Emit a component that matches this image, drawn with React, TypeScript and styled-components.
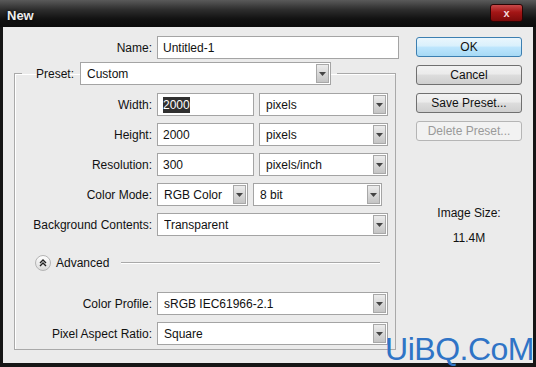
import React from 'react';
import styled, { createGlobalStyle } from 'styled-components';

const GlobalStyle = createGlobalStyle`
  body {
    margin: 0;
    font-family: 'Liberation Sans', Arial, sans-serif;
    font-size: 12px;
    color: #111;
  }
`;

const Window = styled.div`
  position: relative;
  width: 536px;
  height: 367px;
  box-sizing: border-box;
  padding: 0 3px 4px 3px;
  display: flex;
  flex-direction: column;
  background: #161616;
  overflow: hidden;
`;

const TitleBar = styled.div`
  height: 27px;
  flex: none;
  display: flex;
  justify-content: space-between;
  align-items: flex-start;
  margin: 0 -3px;
  padding: 0 13px 0 7px;
  background: linear-gradient(#5a5a5a 0%, #2e2e2e 35%, #121212 70%, #0c0c0c 100%);
`;

const Title = styled.span`
  margin-top: 8px;
  color: #ececec;
  font-weight: bold;
  font-size: 13px;
  text-shadow: 0 0 3px #000;
`;

const CloseButton = styled.div`
  margin-top: 4px;
  width: 33px;
  height: 18px;
  box-sizing: border-box;
  border: 1px solid #2a0505;
  border-radius: 3px;
  background: linear-gradient(#c84a4a 0%, #a41616 45%, #7c0a0a 100%);
  color: #f4dede;
  font-size: 11px;
  font-weight: bold;
  display: flex;
  align-items: center;
  justify-content: center;
`;

const Body = styled.div`
  flex: 1;
  display: flex;
  padding: 9px 0 0 11px;
  background: #ebebeb;
`;

const FormColumn = styled.div`
  width: 385px;
  display: flex;
  flex-direction: column;
`;

const Row = styled.div`
  display: flex;
  align-items: center;
  gap: 5px;
  height: 23px;
`;

const Label = styled.span<{ $w: number }>`
  width: ${(p) => p.$w}px;
  flex: none;
  text-align: right;
  white-space: nowrap;
`;

const TextBox = styled.div<{ $w: number }>`
  width: ${(p) => p.$w}px;
  height: 23px;
  box-sizing: border-box;
  flex: none;
  display: flex;
  align-items: center;
  padding-left: 5px;
  background: #fff;
  border: 1px solid #a4a4a4;
  white-space: nowrap;
`;

const Selected = styled.span`
  background: #303030;
  color: #fff;
  padding: 1px 0;
`;

const DropBox = styled.div<{ $w: number }>`
  width: ${(p) => p.$w}px;
  height: 23px;
  box-sizing: border-box;
  flex: none;
  display: flex;
  align-items: center;
  padding: 0 1px 0 6px;
  background: #fff;
  border: 1px solid #a4a4a4;
  white-space: nowrap;
`;

const DropValue = styled.span`
  flex: 1;
  overflow: hidden;
`;

const Arrow = styled.span`
  width: 13px;
  height: 19px;
  box-sizing: border-box;
  flex: none;
  display: flex;
  align-items: center;
  justify-content: center;
  border: 1px solid #a8a8a8;
  background: linear-gradient(#ececec, #c4c4c4);
`;

const Group = styled.fieldset`
  width: 382px;
  box-sizing: border-box;
  min-width: 0;
  margin: 3px 0 0 0;
  padding: 8px 0 4px 0;
  border: 1px solid #a9a9a9;
  box-shadow: inset 1px 1px 0 #fff;
`;

const Legend = styled.legend`
  margin-left: 7px;
  padding: 0 6px 0 14px;
  display: flex;
  align-items: center;
  gap: 6px;
`;

const Rows = styled.div`
  display: flex;
  flex-direction: column;
  gap: 7px;
`;

const AdvancedRow = styled.div`
  display: flex;
  align-items: center;
  height: 22px;
  margin: 16px 15px 18px 20px;
  gap: 5px;
`;

const ToggleCircle = styled.span`
  width: 16px;
  height: 16px;
  box-sizing: border-box;
  border-radius: 50%;
  border: 1px solid #b4b4b4;
  background: linear-gradient(#fdfdfd, #dcdcdc);
  display: flex;
  align-items: center;
  justify-content: center;
`;

const Rule = styled.span`
  flex: 1;
  margin-left: 7px;
  border-top: 1px solid #a9a9a9;
  border-bottom: 1px solid #fff;
`;

const ButtonColumn = styled.div`
  width: 106px;
  margin-left: 17px;
  padding-top: 1px;
  display: flex;
  flex-direction: column;
  gap: 8px;
`;

const Button = styled.div<{ $kind?: 'default' | 'disabled' }>`
  height: 20px;
  box-sizing: border-box;
  display: flex;
  align-items: center;
  justify-content: center;
  border-radius: 3px;
  border: 1px solid
    ${(p) => (p.$kind === 'default' ? '#3c7fb1' : p.$kind === 'disabled' ? '#b5b5b5' : '#707070')};
  background: ${(p) =>
    p.$kind === 'default'
      ? 'linear-gradient(#eaf6fd 0%, #d9f0fc 45%, #bee6fd 50%, #a7d9f5 100%)'
      : p.$kind === 'disabled'
        ? '#f2f2f2'
        : 'linear-gradient(#f2f2f2 0%, #ebebeb 45%, #dddddd 50%, #cfcfcf 100%)'};
  color: ${(p) => (p.$kind === 'disabled' ? '#9a9a9a' : '#111')};
`;

const SizeInfo = styled.div`
  margin-top: 52px;
  text-align: center;
  line-height: 25px;
`;

const Watermark = styled.div`
  position: absolute;
  right: 2px;
  bottom: 1px;
  font-size: 32px;
  line-height: 34px;
  color: #2f74c6;
  letter-spacing: -0.5px;
`;

const ArrowIcon = () => (
  <svg width="7" height="4" viewBox="0 0 7 4">
    <path d="M0 0h7L3.5 4z" fill="#444" />
  </svg>
);

const Dropdown = ({ w, value }: { w: number; value: string }) => (
  <DropBox $w={w}>
    <DropValue>{value}</DropValue>
    <Arrow>
      <ArrowIcon />
    </Arrow>
  </DropBox>
);

const LABEL_W = 137;

export default function App() {
  return (
    <>
      <GlobalStyle />
      <Window>
        <TitleBar>
          <Title>New</Title>
          <CloseButton>x</CloseButton>
        </TitleBar>
        <Body>
          <FormColumn>
            <Row>
              <Label $w={138}>Name:</Label>
              <TextBox $w={242}>Untitled-1</TextBox>
            </Row>
            <Group>
              <Legend>
                <span>Preset:</span>
                <Dropdown w={251} value="Custom" />
              </Legend>
              <Rows>
                <Row>
                  <Label $w={LABEL_W}>Width:</Label>
                  <TextBox $w={97}>
                    <Selected>2000</Selected>
                  </TextBox>
                  <Dropdown w={129} value="pixels" />
                </Row>
                <Row>
                  <Label $w={LABEL_W}>Height:</Label>
                  <TextBox $w={97}>2000</TextBox>
                  <Dropdown w={129} value="pixels" />
                </Row>
                <Row>
                  <Label $w={LABEL_W}>Resolution:</Label>
                  <TextBox $w={97}>300</TextBox>
                  <Dropdown w={129} value="pixels/inch" />
                </Row>
                <Row>
                  <Label $w={LABEL_W}>Color Mode:</Label>
                  <Dropdown w={91} value="RGB Color" />
                  <Dropdown w={129} value="8 bit" />
                </Row>
                <Row>
                  <Label $w={LABEL_W}>Background Contents:</Label>
                  <Dropdown w={231} value="Transparent" />
                </Row>
              </Rows>
              <AdvancedRow>
                <ToggleCircle>
                  <svg width="8" height="8" viewBox="0 0 8 8">
                    <path d="M1 4L4 1L7 4M1 7L4 4L7 7" fill="none" stroke="#222" strokeWidth="1.4" />
                  </svg>
                </ToggleCircle>
                <span>Advanced</span>
                <Rule />
              </AdvancedRow>
              <Rows>
                <Row>
                  <Label $w={LABEL_W}>Color Profile:</Label>
                  <Dropdown w={231} value="sRGB IEC61966-2.1" />
                </Row>
                <Row>
                  <Label $w={LABEL_W}>Pixel Aspect Ratio:</Label>
                  <Dropdown w={231} value="Square" />
                </Row>
              </Rows>
            </Group>
          </FormColumn>
          <ButtonColumn>
            <Button $kind="default">OK</Button>
            <Button>Cancel</Button>
            <Button>Save Preset...</Button>
            <Button $kind="disabled">Delete Preset...</Button>
            <SizeInfo>
              Image Size:
              <br />
              11.4M
            </SizeInfo>
          </ButtonColumn>
        </Body>
        <Watermark>UiBQ.CoM</Watermark>
      </Window>
    </>
  );
}
